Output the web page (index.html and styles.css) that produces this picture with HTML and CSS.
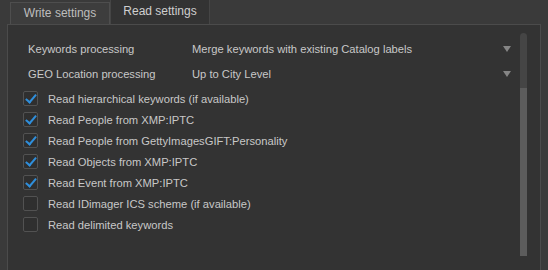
FILE: index.html
```html
<!DOCTYPE html>
<html lang="en">
<head>
  <meta charset="UTF-8" />
  <title>Read settings</title>
  <link rel="stylesheet" href="styles.css">
</head>
<body>
  <div class="tabs">
    <div class="tab">Write settings</div>
    <div class="tab active">Read settings</div>
  </div>

  <div class="panel">
    <div class="content">
      <div class="combo-row">
        <span class="label">Keywords processing</span>
        <span class="value">Merge keywords with existing Catalog labels</span>
        <span class="arrow"></span>
      </div>
      <div class="combo-row">
        <span class="label">GEO Location processing</span>
        <span class="value">Up to City Level</span>
        <span class="arrow"></span>
      </div>

      <div class="checks">
        <label class="check"><span class="box on"></span>Read hierarchical keywords (if available)</label>
        <label class="check"><span class="box on"></span>Read People from XMP:IPTC</label>
        <label class="check"><span class="box on"></span>Read People from GettyImagesGIFT:Personality</label>
        <label class="check"><span class="box on"></span>Read Objects from XMP:IPTC</label>
        <label class="check"><span class="box on"></span>Read Event from XMP:IPTC</label>
        <label class="check"><span class="box"></span>Read IDimager ICS scheme (if available)</label>
        <label class="check"><span class="box"></span>Read delimited keywords</label>
      </div>
    </div>
    <div class="scrollbar"><div class="thumb"></div></div>
  </div>
</body>
</html>
```

FILE: styles.css
```css
:root {
  --bg-color: #3a3a3a;
  --panel-bg: #333333;
  --border: #4b4b4b;
  --text-color: #c8c8c8;
  --check-blue: #2f8fdc;
}

body {
  background: var(--bg-color);
  color: var(--text-color);
  font-family: "Liberation Sans", Arial, sans-serif;
  font-size: 11.2px;
  margin: 0;
  height: 270px;
  overflow: hidden;
}

.tabs {
  display: flex;
  padding-left: 10px;
  height: 24px;
  align-items: flex-end;
  font-size: 12px;
}

.tab {
  width: 98px;
  height: 21px;
  line-height: 21px;
  text-align: center;
  background: #3d3d3d;
  border: 1px solid #4e4e4e;
  border-bottom: none;
  color: #bdbdbd;
}

.tab.active {
  width: 98px;
  height: 24px;
  line-height: 22px;
  background: var(--panel-bg);
  border-color: #454545;
  border-top: none;
  color: #cfcfcf;
}

.panel {
  margin-left: 7px;
  width: 532px;
  height: 246px;
  background: var(--panel-bg);
  border: 1px solid var(--border);
  border-bottom: none;
  display: flex;
}

.content {
  flex: 1;
  padding: 11px 0 0 20px;
}

.combo-row {
  display: flex;
  align-items: center;
  height: 25px;
}

.label {
  width: 164px;
}

.value {
  flex: 1;
}

.arrow {
  width: 0;
  height: 0;
  margin-right: 9px;
  border-left: 4px solid transparent;
  border-right: 4px solid transparent;
  border-top: 6px solid #858585;
}

.checks {
  margin-top: 2px;
  margin-left: -5px;
}

.check {
  display: flex;
  align-items: center;
  height: 21px;
}

.box {
  width: 13px;
  height: 13px;
  border: 1px solid #525252;
  border-radius: 2px;
  background: #2f2f2f;
  margin-right: 10px;
  position: relative;
}

.box.on::after {
  content: "";
  position: absolute;
  left: 4px;
  top: 0px;
  width: 4px;
  height: 9px;
  border-right: 2px solid var(--check-blue);
  border-bottom: 2px solid var(--check-blue);
  transform: rotate(40deg);
}

.scrollbar {
  width: 7px;
  margin: 8px 13px 0 0;
  height: 223px;
  background: #454545;
  border-radius: 4px 4px 0 0;
  display: flex;
  flex-direction: column;
  justify-content: flex-end;
}

.thumb {
  height: 168px;
  background: #5c5c5c;
}
```
